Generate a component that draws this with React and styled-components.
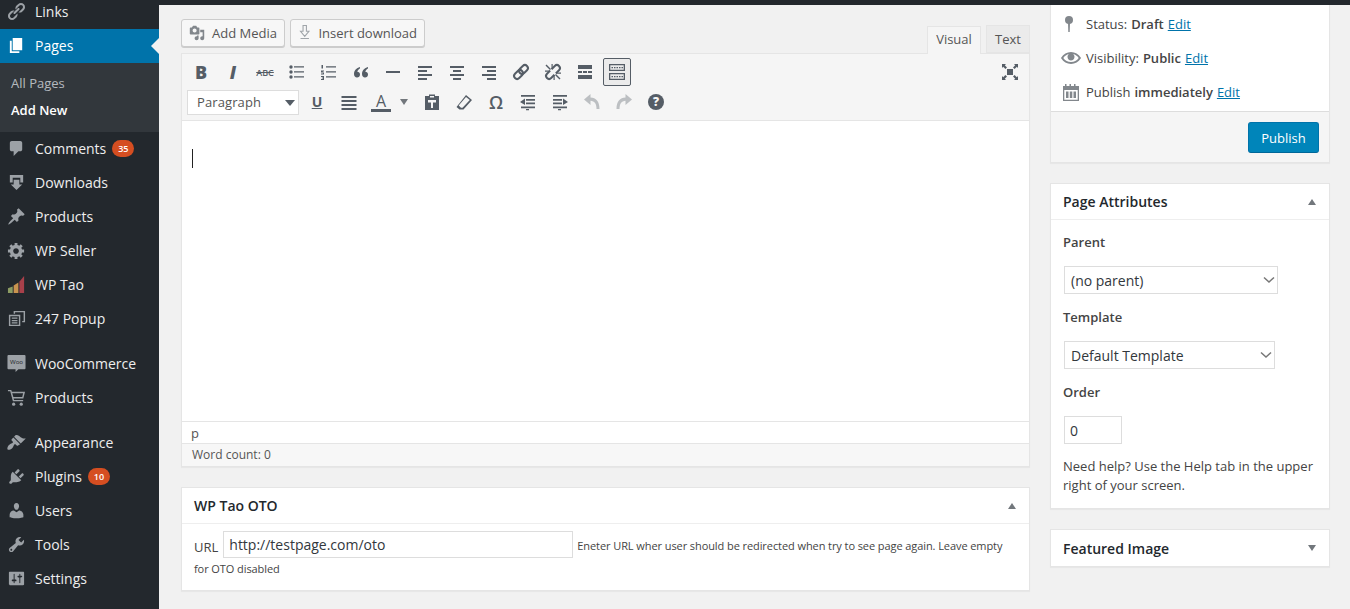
import React from "react";
import styled, { createGlobalStyle } from "styled-components";

const GlobalStyle = createGlobalStyle`
  html, body {
    margin: 0;
    height: 100%;
    overflow: hidden;
    background: #f1f1f1;
    font-family: "Open Sans", "Liberation Sans", sans-serif;
    font-size: 13px;
    color: #444;
  }
  #root { height: 100%; }
  * { box-sizing: border-box; }
`;

const Page = styled.div`
  display: flex;
  height: 609px;
  overflow: hidden;
`;

const Sidebar = styled.nav`
  width: 159px;
  flex: none;
  background: #23282d;
`;

const Menu = styled.ul`
  list-style: none;
  margin: -5px 0 0;
  padding: 0;
`;

const MenuItem = styled.li`
  position: relative;
  display: flex;
  align-items: center;
  height: 34px;
  margin-top: ${(props) => (props.$spaced ? "11px" : "0")};
  padding: 0 0 2px 7px;
  font-size: 14px;
  color: ${(props) => (props.$active ? "#fff" : "#eee")};
  background: ${(props) => (props.$active ? "#0073aa" : "transparent")};

  ${(props) =>
    props.$active &&
    `&::after {
      content: "";
      position: absolute;
      right: 0;
      top: 9px;
      border: 8px solid transparent;
      border-right-color: #f1f1f1;
      border-left-width: 0;
    }`}
`;

const MenuIcon = styled.svg`
  width: 19px;
  height: 19px;
  flex: none;
  margin-right: 9px;
  fill: ${(props) => (props.$active ? "#fff" : "#9ca1a6")};
`;

const Badge = styled.span`
  display: inline-block;
  margin-left: 6px;
  min-width: 22px;
  height: 17px;
  padding: 0 5px;
  border-radius: 9px;
  background: #d54e21;
  color: #fff;
  font-size: 9px;
  font-weight: 600;
  line-height: 17px;
  text-align: center;
`;

const SubMenu = styled.ul`
  list-style: none;
  margin: 0;
  padding: 7px 0 0;
  height: 69px;
  background: #32373c;
`;

const SubItem = styled.li`
  height: 26px;
  margin-top: ${(props) => (props.$current ? "1px" : "0")};
  padding-left: 11px;
  font-size: 13px;
  line-height: 26px;
  font-weight: ${(props) => (props.$current ? 600 : 400)};
  color: ${(props) => (props.$current ? "#fff" : "rgba(240,245,250,.7)")};
`;

const Main = styled.main`
  flex: 1;
  min-width: 0;
  display: flex;
  flex-direction: column;
`;

const TopBar = styled.div`
  height: 5px;
  flex: none;
  background: #23282d;
`;

const Columns = styled.div`
  display: flex;
  gap: 20px;
  padding-left: 22px;
  align-items: flex-start;
`;

const LeftColumn = styled.div`
  width: 849px;
  flex: none;
  padding-top: 14px;
`;

const RightColumn = styled.div`
  width: 280px;
  flex: none;
  display: flex;
  flex-direction: column;
  gap: 20px;
`;

const EditorTop = styled.div`
  display: flex;
  align-items: flex-end;
  height: 34px;
`;

const MediaButton = styled.button`
  display: flex;
  align-items: center;
  gap: 7px;
  height: 28px;
  width: ${(props) => props.$width}px;
  margin: 0 5px 6px 0;
  padding: 0 7px;
  border: 1px solid #ccc;
  border-radius: 3px;
  background: #f7f7f7;
  box-shadow: 0 1px 0 #ccc;
  color: #555;
  font: 13px "Open Sans", sans-serif;
  white-space: nowrap;
`;

const Tab = styled.div`
  height: 28px;
  width: ${(props) => props.$width}px;
  margin-left: ${(props) => (props.$first ? "auto" : "5px")};
  margin-bottom: ${(props) => (props.$first ? "-1px" : "0")};
  position: relative;
  z-index: 1;
  border: 1px solid #e5e5e5;
  border-bottom: ${(props) => (props.$first ? "none" : "1px solid #e5e5e5")};
  background: ${(props) => (props.$first ? "#f5f5f5" : "#ebebeb")};
  color: #555;
  font-size: 13px;
  line-height: ${(props) => (props.$first ? "25px" : "27px")};
  text-align: center;
`;

const EditorBox = styled.section`
  border: 1px solid #e5e5e5;
  box-shadow: 0 1px 1px rgba(0, 0, 0, 0.04);
  background: #fff;
`;

const Toolbar = styled.div`
  height: 67px;
  padding: 4px 5px 0;
  background: #f5f5f5;
  border-bottom: 1px solid #e5e5e5;
`;

const ToolRow = styled.div`
  display: flex;
  align-items: center;
  gap: 4px;
  height: 28px;
  margin-bottom: 2px;
`;

const ToolButton = styled.div`
  width: ${(props) => props.$width || 28}px;
  height: 28px;
  flex: none;
  margin-left: ${(props) => (props.$pushed ? "auto" : props.$tuck ? "-4px" : "0")};
  display: flex;
  align-items: center;
  justify-content: center;
  border: 1px solid ${(props) => (props.$pressed ? "#555d66" : "transparent")};
  border-radius: 2px;
  background: ${(props) => (props.$pressed ? "#ebebeb" : "transparent")};
  color: #555d66;
`;

const ToolIcon = styled.svg`
  width: 20px;
  height: 20px;
  fill: ${(props) => (props.$disabled ? "#bcbfc2" : "#555d66")};
  stroke: none;
`;

const Letter = styled.span`
  font-size: ${(props) => props.$size || 16}px;
  font-weight: ${(props) => props.$weight || 700};
  font-style: ${(props) => (props.$italic ? "italic" : "normal")};
  text-decoration: ${(props) => props.$line || "none"};
  line-height: 1;
`;

const ColorLetter = styled.span`
  display: block;
  width: 20px;
  border-bottom: 3px solid #555d66;
  font-size: 16px;
  font-weight: 400;
  line-height: 16px;
  text-align: center;
`;

const HelpDot = styled.span`
  width: 16px;
  height: 16px;
  border-radius: 50%;
  background: #555d66;
  color: #f5f5f5;
  font-size: 12px;
  font-weight: 800;
  line-height: 16px;
  text-align: center;
`;

const FormatSelect = styled.div`
  position: relative;
  width: 112px;
  height: 25px;
  flex: none;
  margin-top: 1px;
  padding-left: 9px;
  background: #fff;
  border: 1px solid #ddd;
  color: #555;
  font-size: 13px;
  line-height: 23px;
  letter-spacing: 0.1px;

  &::after {
    content: "";
    position: absolute;
    right: 3px;
    top: 9px;
    border: 5px solid transparent;
    border-top: 6px solid #555d66;
    border-bottom: 0;
  }
`;

const EditArea = styled.div`
  height: 300px;
  padding: 28px 10px;
`;

const Caret = styled.div`
  width: 1px;
  height: 19px;
  background: #222;
`;

const PathBar = styled.div`
  height: 22px;
  padding-left: 9px;
  border-top: 1px solid #e5e5e5;
  font-size: 13px;
  line-height: 22px;
  color: #555;
`;

const WordCount = styled.div`
  height: 23px;
  padding-left: 10px;
  background: #f7f7f7;
  border-top: 1px solid #e5e5e5;
  font-size: 12px;
  line-height: 22px;
  color: #555;
`;

const Box = styled.section`
  margin-top: ${(props) => props.$top || 0}px;
  background: #fff;
  border: 1px solid #e5e5e5;
  box-shadow: 0 1px 1px rgba(0, 0, 0, 0.04);
`;

const BoxHead = styled.header`
  display: flex;
  align-items: center;
  justify-content: space-between;
  height: 36px;
  padding: 0 12px;
  border-bottom: ${(props) => (props.$closed ? "none" : "1px solid #eee")};
  color: #23282d;
  font-size: 14px;
  font-weight: 600;
`;

const Toggle = styled.span`
  width: 0;
  height: 0;
  margin-right: 1px;
  border-left: 4px solid transparent;
  border-right: 4px solid transparent;
  border-bottom: ${(props) => (props.$closed ? "0" : "6px solid #72777c")};
  border-top: ${(props) => (props.$closed ? "6px solid #72777c" : "0")};
`;

const OtoBody = styled.div`
  padding: 7px 12px 10px;
  font-size: 11px;
  line-height: 22px;
`;

const OtoLabel = styled.label`
  font-size: 13px;
  margin-right: 5px;
  vertical-align: -2px;
`;

const UrlInput = styled.input`
  width: 350px;
  height: 27px;
  margin-right: 4px;
  padding: 0 5px;
  border: 1px solid #ddd;
  background: #fff;
  color: #32373c;
  font: 14px "Open Sans", sans-serif;
  vertical-align: baseline;
  outline: none;
`;

const Hint = styled.span`
  display: ${(props) => (props.$block ? "block" : "inline")};
  letter-spacing: -0.08px;
`;

const PublishSide = styled.section`
  background: #fff;
  border: 1px solid #e5e5e5;
  border-top: none;
  box-shadow: 0 1px 1px rgba(0, 0, 0, 0.04);
`;

const MetaList = styled.div`
  padding: 2px 0;
`;

const MetaRow = styled.div`
  display: flex;
  align-items: center;
  height: 34px;
  padding-left: 10px;
  color: #444;
  font-size: 13px;

  b { font-weight: 600; margin: 0 4px; }
`;

const MetaIcon = styled.svg`
  width: 20px;
  height: 20px;
  flex: none;
  margin-right: 5px;
  fill: #82878c;
`;

const EditLink = styled.a`
  color: #0073aa;
  text-decoration: underline;
`;

const PublishBar = styled.div`
  display: flex;
  justify-content: flex-end;
  height: 51px;
  padding: 10px 10px 0;
  background: #f5f5f5;
  border-top: 1px solid #ddd;
`;

const PublishButton = styled.button`
  width: 71px;
  height: 31px;
  background: #0085ba;
  border: 1px solid #0073aa;
  border-bottom-color: #006799;
  border-radius: 3px;
  color: #fff;
  font: 13px "Open Sans", sans-serif;
`;

const AttrBody = styled.div`
  padding: 10px 12px 13px;
`;

const AttrLabel = styled.p`
  margin: ${(props) => (props.$first ? "3px" : "14px")} 0 0;
  height: 18px;
  font-size: 13px;
  font-weight: 600;
  line-height: 18px;
  color: #444;
`;

const chevron =
  "data:image/svg+xml;utf8,<svg xmlns='http://www.w3.org/2000/svg' width='12' height='8'><path d='M1 1.500l5 4.500 5-4.500' fill='none' stroke='%23777' stroke-width='1.500'/></svg>";

const AttrSelect = styled.select`
  display: block;
  appearance: none;
  width: ${(props) => props.$width}px;
  height: 28px;
  margin: 15px 0 0 1px;
  padding: 0 6px;
  background: #fff url("${chevron}") no-repeat right 2px center;
  border: 1px solid #ddd;
  border-radius: 0;
  color: #32373c;
  font: 14px "Open Sans", sans-serif;
`;

const OrderInput = styled.input`
  display: block;
  width: 58px;
  height: 28px;
  margin: 15px 0 0 1px;
  padding: 0 5px;
  border: 1px solid #ddd;
  color: #32373c;
  font: 14px "Open Sans", sans-serif;
  outline: none;
`;

const HelpText = styled.p`
  margin: 13px 0 0;
  font-size: 13px;
  line-height: 19px;
  color: #444;
`;

const menuIcons = {
  links: (
    <>
      <path d="M17.74 2.26c1.68 1.69 1.68 4.41 0 6.1l-1.53 1.52c-1.12 1.12-2.7 1.47-4.14 1.09l2.62-2.61.76-.77.76-.76c.84-.84.84-2.2 0-3.04-.84-.85-2.2-.85-3.04 0l-.77.76-3.38 3.38c-.37-1.44-.02-3.02 1.1-4.14l1.52-1.53c1.69-1.68 4.42-1.68 6.1 0z" />
      <path d="M8.59 12.43l4.34-4.34c.42-.42.42-1.1 0-1.52-.44-.43-1.13-.39-1.53 0l-4.33 4.34c-.42.42-.42 1.1 0 1.52.44.43 1.13.39 1.52 0z" />
      <path d="M2.26 17.74c-1.68-1.69-1.68-4.41 0-6.1l1.53-1.52c1.12-1.12 2.7-1.47 4.14-1.09L5.31 11.64l-1.52 1.53c-.84.84-.84 2.2 0 3.04.84.85 2.2.85 3.04 0l4.15-4.14c.37 1.44.02 3.02-1.1 4.14l-1.52 1.53c-1.69 1.68-4.42 1.68-6.1 0z" />
    </>
  ),
  pages: <path d="M6 15V2h10v13H6zm-1 1h8v2H3V5h2v11z" />,
  comments: <path d="M5 2h9c1.1 0 2 .9 2 2v7c0 1.1-.9 2-2 2h-2l-5 5v-5H5c-1.1 0-2-.9-2-2V4c0-1.1.9-2 2-2z" />,
  downloads: (
    <>
      <path d="M3 2h14v8h-3V5H6v5H3z" />
      <path d="M7 7h6v5h3l-6 6-6-6h3z" />
    </>
  ),
  pin: <path d="M10.44 3.02l1.82-1.82 6.36 6.35-1.83 1.82c-1.05-.68-2.48-.57-3.41.36l-.75.75c-.92.93-1.04 2.35-.35 3.41l-1.83 1.82-2.41-2.41-2.8 2.79c-.42.42-3.38 2.71-3.8 2.29s1.86-3.39 2.28-3.81l2.79-2.79L4.1 9.36l1.83-1.82c1.05.69 2.48.57 3.4-.36l.75-.75c.93-.92 1.05-2.35.36-3.41z" />,
  gear: <path d="M18 12h-2.18c-.17.7-.44 1.35-.81 1.93l1.54 1.54-2.1 2.1-1.54-1.54c-.58.36-1.23.63-1.91.79V19H8v-2.18c-.68-.16-1.33-.43-1.91-.79l-1.54 1.54-2.12-2.12 1.54-1.54c-.36-.58-.63-1.23-.79-1.91H1V9.03h2.17c.16-.7.44-1.35.8-1.94L2.43 5.55l2.1-2.1 1.54 1.54c.58-.37 1.24-.64 1.93-.81V2h3v2.18c.68.16 1.33.43 1.91.79l1.54-1.54 2.12 2.12-1.54 1.54c.36.59.64 1.24.8 1.94H18V12zm-8.5 1.5c1.66 0 3-1.34 3-3s-1.34-3-3-3-3 1.34-3 3 1.34 3 3 3z" />,
  tao: (
    <>
      <path fill="#8c9c63" d="M1 19v-5l5-2v7z" />
      <path fill="#c9934f" d="M7 19v-8l5-3v11z" />
      <path fill="#a8404a" d="M13 19V7l5-6v18z" />
    </>
  ),
  popup: (
    <>
      <path d="M7 2h12v12h-3v-1.500h1.500v-9h-9V5H7z" />
      <path d="M2 6h12v12H2zm1.500 1.500v9h9v-9z" />
      <path d="M5 9h6v1.300H5zm0 2.500h6v1.300H5zm0 2.500h6v1.300H5z" />
    </>
  ),
  cart: (
    <>
      <path d="M1 2h3.500l.6 2H19l-1.800 7H7l.4 1.500H17V14H6.200L3.400 3.500H1zm4.500 3.500l1.200 4h9.300l1-4z" />
      <circle cx="7" cy="17" r="1.700" />
      <circle cx="15" cy="17" r="1.700" />
    </>
  ),
  brush: <path d="M14.480 11.060L7.410 3.990l1.500-1.500c.5-.56 2.300-.47 3.510.32 1.210.8 1.430 1.280 2.910 2.100 1.180.64 2.450 1.260 4.450.85zm-.71.71L6.700 4.700 4.930 6.470c-.39.39-.39 1.020 0 1.410l1.060 1.060c.39.39.39 1.030 0 1.420-.6.6-2.430 1.110-3.210 1.690-.35.26-.7.530-1.010.84-1.340 1.340-1.740 3.960-1.120 4.580.61.61 3.230.22 4.570-1.110.31-.31.58-.66.85-1.010.58-.78 1.090-2.610 1.690-3.210.39-.39 1.020-.39 1.410 0l1.060 1.060c.39.39 1.020.39 1.410 0z" />,
  plug: <path d="M13.110 4.360L9.870 7.600 8 5.730l3.240-3.240c.35-.34 1.050-.2 1.560.32.52.51.66 1.210.31 1.550zm-8 1.770l.91-1.120 9.010 9.010-1.190.84c-.71.71-2.630 1.160-3.820 1.160H6.140L4.900 17.260c-.59.59-1.540.59-2.120 0-.59-.58-.59-1.530 0-2.120l1.240-1.240v-3.880c0-1.130.4-3.190 1.090-3.890zm7.260 3.970l3.240-3.240c.34-.35 1.040-.21 1.550.31.52.51.66 1.210.31 1.550l-3.240 3.250z" />,
  users: <path d="M10 9.250c-2.270 0-2.730-3.440-2.730-3.440C7 4.020 7.820 2 9.970 2c2.160 0 2.980 2.020 2.710 3.810 0 0-.41 3.440-2.680 3.440zm0 2.570L12.720 10c2.390 0 4.520 2.330 4.520 4.530v2.490s-3.650 1.130-7.240 1.130c-3.650 0-7.240-1.130-7.240-1.130v-2.490c0-2.250 1.940-4.480 4.470-4.480z" />,
  tools: <path d="M16.680 9.770c-1.340 1.340-3.300 1.670-4.950.99l-5.410 6.520c-.99.99-2.590.99-3.580 0s-.99-2.590 0-3.570l6.520-5.420c-.68-1.650-.35-3.610.99-4.950 1.280-1.280 3.120-1.620 4.720-1.060l-2.890 2.890 2.820 2.820 2.860-2.870c.53 1.580.18 3.390-1.080 4.650zM3.810 16.210c.4.39 1.040.39 1.430 0 .4-.4.4-1.040 0-1.430-.39-.4-1.030-.4-1.430 0-.39.39-.39 1.030 0 1.430z" />,
  settings: <path d="M18 16V4c0-.55-.45-1-1-1H3c-.55 0-1 .45-1 1v12c0 .55.45 1 1 1h14c.55 0 1-.45 1-1zM8 11h1c.55 0 1 .45 1 1s-.45 1-1 1H8v1.500c0 .28-.22.5-.5.5s-.5-.22-.5-.5V13H6c-.55 0-1-.45-1-1s.45-1 1-1h1V5.500c0-.28.22-.5.5-.5s.5.22.5.5V11zm5-2h-1c-.55 0-1-.45-1-1s.45-1 1-1h1V5.500c0-.28.22-.5.5-.5s.5.22.5.5V7h1c.55 0 1 .45 1 1s-.45 1-1 1h-1v5.500c0 .28-.22.5-.5.5s-.5-.22-.5-.5V9z" />,
  woo: (
    <>
      <path d="M1.500 1h17c.6 0 1 .4 1 1v13c0 .6-.4 1-1 1H12l-3 3v-3H1.500c-.6 0-1-.4-1-1V2c0-.6.4-1 1-1z" />
      <text x="10" y="11" textAnchor="middle" fontSize="6.500" fontFamily="Open Sans, sans-serif" fill="#23282d">Woo</text>
    </>
  ),
};

const beforeSub = [{ icon: "links", label: "Links" }];
const afterSub = [
  { icon: "comments", label: "Comments", badge: 35 },
  { icon: "downloads", label: "Downloads" },
  { icon: "pin", label: "Products" },
  { icon: "gear", label: "WP Seller" },
  { icon: "tao", label: "WP Tao" },
  { icon: "popup", label: "247 Popup" },
  { icon: "woo", label: "WooCommerce", spaced: true },
  { icon: "cart", label: "Products" },
  { icon: "brush", label: "Appearance", spaced: true },
  { icon: "plug", label: "Plugins", badge: 10 },
  { icon: "users", label: "Users" },
  { icon: "tools", label: "Tools" },
  { icon: "settings", label: "Settings" },
];

const SideEntry = ({ icon, label, badge, spaced, active }) => (
  <MenuItem $spaced={spaced} $active={active}>
    <MenuIcon viewBox="0 0 20 20" $active={active}>
      {menuIcons[icon]}
    </MenuIcon>
    {label}
    {badge && <Badge>{badge}</Badge>}
  </MenuItem>
);

const Tool = ({ d, children, ...rest }) => (
  <ToolButton {...rest}>
    <ToolIcon viewBox="0 0 20 20" $disabled={rest.$disabled}>
      {d ? <path fillRule="evenodd" d={d} /> : children}
    </ToolIcon>
  </ToolButton>
);

const App = () => {
  return (
    <Page>
      <GlobalStyle />
      <Sidebar>
        <Menu>
          {beforeSub.map((item) => (
            <SideEntry key={item.label} {...item} />
          ))}
          <SideEntry icon="pages" label="Pages" active />
          <SubMenu>
            <SubItem>All Pages</SubItem>
            <SubItem $current>Add New</SubItem>
          </SubMenu>
          {afterSub.map((item) => (
            <SideEntry key={item.icon} {...item} />
          ))}
        </Menu>
      </Sidebar>
      <Main>
        <TopBar />
        <Columns>
          <LeftColumn>
            <EditorTop>
              <MediaButton $width={104}>
                <svg width="18" height="18" viewBox="0 0 20 20" fill="#82878c">
                  <path d="M13 11V4c0-.55-.45-1-1-1h-1.670L9 1H5L3.670 3H2c-.55 0-1 .45-1 1v7c0 .55.45 1 1 1h10c.55 0 1-.45 1-1zM7 4.500c1.380 0 2.500 1.120 2.500 2.500S8.380 9.500 7 9.500 4.500 8.380 4.500 7 5.620 4.500 7 4.500zM14 6h5v10.500c0 1.380-1.120 2.500-2.500 2.500S14 17.880 14 16.500s1.120-2.500 2.500-2.500c.17 0 .34.02.5.05V9h-3V6zm-4 8.050V13h2v3.500c0 1.380-1.120 2.500-2.500 2.500S7 17.880 7 16.500 8.120 14 9.500 14c.17 0 .34.02.5.05z" />
                </svg>
                Add Media
              </MediaButton>
              <MediaButton $width={135}>
                <svg width="15" height="18" viewBox="0 0 16 20" fill="none" stroke="#a0a5aa" strokeWidth="1.300">
                  <path d="M6 1h4v7h3l-5 6-5-6h3zM3 16.500h10" />
                </svg>
                Insert download
              </MediaButton>
              <Tab $first $width={54}>Visual</Tab>
              <Tab $width={44}>Text</Tab>
            </EditorTop>
            <EditorBox>
              <Toolbar>
                <ToolRow>
                  <ToolButton><Letter $size={18} $weight={800}>B</Letter></ToolButton>
                  <ToolButton><Letter $size={18} $weight={800} $italic>I</Letter></ToolButton>
                  <ToolButton><Letter $size={9} $weight={600} $line="line-through">ABC</Letter></ToolButton>
                  <Tool>
                    <circle cx="4" cy="5" r="1.700" /><circle cx="4" cy="10" r="1.700" /><circle cx="4" cy="15" r="1.700" />
                    <path d="M7 4.300h10v1.300H7zm0 5h10v1.300H7zm0 5h10v1.300H7z" />
                  </Tool>
                  <Tool d="M2.500 3h1.500v3.500H2.500zM2 8.500h3v1H3.800v1H5v2H2v-1h1.800v-1H2zM2 14h3v4H2v-1h2v-.6H2.800v-.8H4V15H2zM7 4.300h10v1.300H7zm0 5h10v1.300H7zm0 5h10v1.300H7z" />
                  <Tool d="M9 5C5.500 6 3 8.500 3 12c0 2 1.300 3.500 3 3.500S9 14.200 9 12.500 7.800 9.800 6.300 9.800c.3-1.300 1.300-2.500 2.700-3.200zm8 0c-3.500 1-6 3.500-6 7 0 2 1.300 3.500 3 3.500s3-1.300 3-3-1.200-2.700-2.700-2.700c.3-1.300 1.300-2.500 2.700-3.200z" />
                  <Tool d="M3 9h14v2H3z" />
                  <Tool d="M3 4h14v2H3zm0 4h9v2H3zm0 4h14v2H3zm0 4h9v2H3z" />
                  <Tool d="M3 4h14v2H3zm3 4h8v2H6zm-3 4h14v2H3zm3 4h8v2H6z" />
                  <Tool d="M3 4h14v2H3zm5 4h9v2H8zm-5 4h14v2H3zm5 4h9v2H8z" />
                  <Tool>
                    <g transform="rotate(-45 10 10)" fill="none" stroke="#555d66" strokeWidth="2">
                      <rect x="1.500" y="7" width="10" height="6" rx="3" />
                      <rect x="8.500" y="7" width="10" height="6" rx="3" />
                    </g>
                  </Tool>
                  <Tool>
                    <g transform="rotate(-45 10 10)" fill="none" stroke="#555d66" strokeWidth="2">
                      <path d="M9 7H4.500a3 3 0 0 0 0 6H9M11 7h4.500a3 3 0 0 1 0 6H11" />
                    </g>
                    <path d="M2.500 3.500l1-1 4.500 4.500-1 1zm15 13-1 1-4.500-4.500 1-1zM2 8.500h5v1.200H2zm11 2h5v1.200h-5zM8.500 2h1.200v5H8.500zm2 11h1.200v5h-1.200z" />
                  </Tool>
                  <Tool d="M3 3h14v4H3zm0 6h4v2H3zm5 0h4v2H8zm5 0h4v2h-4zM3 13h14v4H3z" />
                  <Tool $pressed d="M2 2h16v7H2zm1.300 1.300v4.400h13.400V3.300zM4.500 5h1.500v1.300H4.500zm2.500 0h1.500v1.300H7zm2.500 0H11v1.300H9.500zM12 5h1.500v1.300H12zm2.500 0H16v1.300h-1.500zM2 11h16v7H2zm1.300 1.300v4.400h13.400v-4.400zM4.500 14h1.500v1.300H4.500zm2.500 0h1.500v1.300H7zm2.500 0H11v1.300H9.500zM12 14h1.500v1.300H12zm2.500 0H16v1.300h-1.500z" />
                  <Tool $pushed d="M7 7h6v6H7zM2 2h4L4.800 3.200 7 5.400 5.400 7 3.200 4.800 2 6zm16 0v4l-1.200-1.200L14.600 7 13 5.400l2.200-2.200L14 2zM2 18v-4l1.200 1.200L5.400 13 7 14.600l-2.200 2.200L6 18zm16 0h-4l1.200-1.200L13 14.600l1.600-1.600 2.200 2.200L18 14z" />
                </ToolRow>
                <ToolRow>
                  <FormatSelect>Paragraph</FormatSelect>
                  <ToolButton><Letter $size={14} $line="underline">U</Letter></ToolButton>
                  <Tool d="M2.500 4h15v2h-15zm0 4h15v2h-15zm0 4h15v2h-15zm0 4h15v2h-15z" />
                  <ToolButton><ColorLetter>A</ColorLetter></ToolButton>
                  <ToolButton $width={19} $tuck>
                    <Toggle $closed />
                  </ToolButton>
                  <Tool d="M3 4h4V2.500h6V4h4v14H3zm5 0v1.500h4V4zM6 8v2.500h3V16h2v-5.500h3V8z" />
                  <Tool d="M12 3l6 5-8.500 9.500H5.500L2.500 15zm0 2L4.700 13.500 7 15.800h1.500L15.800 8z" />
                  <ToolButton><Letter $size={18} $weight={600}>Ω</Letter></ToolButton>
                  <Tool d="M3 3h14v1.800H3zm5 4h9v1.800H8zm-1-.5v6.500L2 10zm1 4h9v1.800H8zM3 14.500h14v1.800H3zm5 2.500h3v1.300H8z" />
                  <Tool d="M3 3h14v1.800H3zm0 4h9v1.800H3zm10-.5V13l5-3zM3 10.500h9v1.800H3zm0 4h14v1.800H3zm5 2.500h3v1.300H8z" />
                  <Tool $disabled d="M2 7.500L8.500 2v3.500c5.500.3 9 3.800 9 11.500h-3c0-5.500-2-8-6-8.300V13z" />
                  <Tool $disabled d="M18 7.500L11.500 2v3.500c-5.500.3-9 3.800-9 11.500h3c0-5.500 2-8 6-8.300V13z" />
                  <ToolButton><HelpDot>?</HelpDot></ToolButton>
                </ToolRow>
              </Toolbar>
              <EditArea><Caret /></EditArea>
              <PathBar>p</PathBar>
              <WordCount>Word count: 0</WordCount>
            </EditorBox>
            <Box $top={20}>
              <BoxHead>
                WP Tao OTO
                <Toggle />
              </BoxHead>
              <OtoBody>
                <OtoLabel>URL</OtoLabel>
                <UrlInput readOnly value="http://testpage.com/oto" />
                <Hint>Eneter URL wher user should be redirected when try to see page again. Leave empty</Hint>
                <Hint $block>for OTO disabled</Hint>
              </OtoBody>
            </Box>
          </LeftColumn>
          <RightColumn>
            <PublishSide>
              <MetaList>
                <MetaRow>
                  <MetaIcon viewBox="0 0 20 20">
                    <circle cx="8" cy="6" r="4" />
                    <path d="M7 9h2l-.3 9H7.300z" />
                  </MetaIcon>
                  Status:<b>Draft</b><EditLink>Edit</EditLink>
                </MetaRow>
                <MetaRow>
                  <MetaIcon viewBox="0 0 20 20">
                    <path d="M19.700 9.400C17.700 6 14 3.900 10 3.900S2.300 6 .3 9.400L0 10l.3.6c2 3.400 5.700 5.500 9.700 5.500s7.700-2.100 9.700-5.500l.3-.6-.3-.6zM10 14.100c-3.100 0-6-1.600-7.700-4.100C3.600 8 5.700 6.600 8 6.100c-.9.6-1.500 1.700-1.500 2.900 0 1.900 1.600 3.500 3.500 3.500s3.500-1.600 3.500-3.500c0-1.200-.6-2.300-1.500-2.900 2.300.5 4.400 1.900 5.700 3.900-1.700 2.500-4.600 4.100-7.700 4.100z" />
                  </MetaIcon>
                  Visibility:<b>Public</b><EditLink>Edit</EditLink>
                </MetaRow>
                <MetaRow>
                  <MetaIcon viewBox="0 0 20 20">
                    <path d="M2 4h2V2h1.500v2h3V2H10v2h3V2h1.500v2H18v15H2zm1.300 4v9.700h13.400V8zM5 9.500h2.500V16H5zm3.800 0h2.500V16H8.800zm3.700 0H15V16h-2.500z" />
                  </MetaIcon>
                  Publish<b>immediately</b><EditLink>Edit</EditLink>
                </MetaRow>
              </MetaList>
              <PublishBar>
                <PublishButton>Publish</PublishButton>
              </PublishBar>
            </PublishSide>
            <Box>
              <BoxHead>
                Page Attributes
                <Toggle />
              </BoxHead>
              <AttrBody>
                <AttrLabel $first>Parent</AttrLabel>
                <AttrSelect $width={214} defaultValue="none">
                  <option value="none">(no parent)</option>
                </AttrSelect>
                <AttrLabel>Template</AttrLabel>
                <AttrSelect $width={211} defaultValue="default">
                  <option value="default">Default Template</option>
                </AttrSelect>
                <AttrLabel>Order</AttrLabel>
                <OrderInput readOnly value="0" />
                <HelpText>Need help? Use the Help tab in the upper right of your screen.</HelpText>
              </AttrBody>
            </Box>
            <Box>
              <BoxHead $closed>
                Featured Image
                <Toggle $closed />
              </BoxHead>
            </Box>
          </RightColumn>
        </Columns>
      </Main>
    </Page>
  );
};

export default App;
